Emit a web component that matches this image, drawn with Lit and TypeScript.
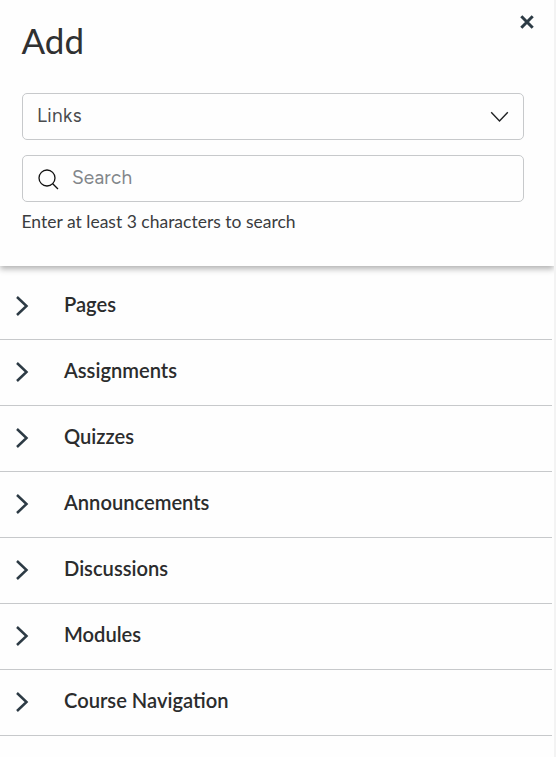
import { LitElement, html, css } from "lit";
import { customElement } from "lit/decorators.js";

const SECTIONS = ["Pages", "Assignments", "Quizzes", "Announcements", "Discussions", "Modules", "Course Navigation"];

@customElement("app-root")
export class AppRoot extends LitElement {
  static styles = css`
    :host { display: block; box-sizing: border-box; height: 757px; width: 556px; overflow: hidden;
      border-right: 2px solid #f3f3f3; background: #fefefe; color: #2b2c2d; font-family: Lato, "Liberation Sans", sans-serif; }
    * { box-sizing: border-box; }
    header { position: relative; height: 266px; padding: 18px 30px 0 21.5px; background: #fefefe;
      box-shadow: 0 3px 6px rgba(0, 0, 0, 0.3); }
    h1 { margin: 0; height: 44px; font-size: 35px; line-height: 44px; font-weight: 400; color: #303132; }
    .close { position: absolute; right: 20px; top: 15px; width: 14px; height: 14px; padding: 0; border: 0; background: none; color: #2d3b45; }
    svg { display: block; fill: none; stroke: currentColor; }
    .field { display: flex; align-items: center; width: 502px; height: 47px; margin-left: 0.5px; border: 1px solid #c7c9cb; border-radius: 5px;
      font-family: Figtree, Inter, sans-serif; font-size: 19px; padding: 0 15px 3px 14px; }
    .select { margin-top: 31px; justify-content: space-between; color: #4a4c4e; letter-spacing: 0.4px; }
    .search { margin-top: 15px; color: #82868a; gap: 14px; letter-spacing: 0.2px; }
    .chevron { margin: 4px -1px 0 0; color: #202224; }
    .glass { margin: 4px -1px 0 1px; color: #111; }
    .hint { margin: 9px 0 0; font-size: 17.5px; line-height: 22px; color: #3a3c3e; }
    ul { list-style: none; margin: 8px 0 0; padding: 0; width: 552px; }
    li { display: flex; align-items: center; height: 66px; border-bottom: 1px solid #c7c9cb; padding: 0 0 5px 15px; gap: 35px;
      font-size: 20.15px; line-height: 24px; font-weight: 600; }
    .arrow { color: #2d3b45; margin-top: 4px; }
  `;

  render() {
    return html`
      <header>
        <h1>Add</h1>
        <button class="close" aria-label="Close">
          <svg width="14" height="14" viewBox="0 0 14 14" stroke-width="3"><path d="M1.3 1.3 12.7 12.7M12.7 1.3 1.3 12.7" /></svg>
        </button>
        <div class="field select">
          <span>Links</span>
          <svg class="chevron" width="19" height="12" viewBox="0 0 19 12" stroke-width="1.4"><path d="M1.2 1.2 9.5 10 17.8 1.2" /></svg>
        </div>
        <div class="field search">
          <svg class="glass" width="21" height="21" viewBox="0 0 21 21" stroke-width="1.3"><circle cx="9" cy="9" r="8" /><path d="M14.7 14.7 20 20" /></svg>
          <span>Search</span>
        </div>
        <p class="hint">Enter at least 3 characters to search</p>
      </header>
      <ul>
        ${SECTIONS.map((name) => html`<li>
          <svg class="arrow" width="14" height="20" viewBox="0 0 14 20" stroke-width="2.5"><path d="M2 1 11.5 10 2 19" /></svg>
          <span>${name}</span>
        </li>`)}
      </ul>
    `;
  }
}
